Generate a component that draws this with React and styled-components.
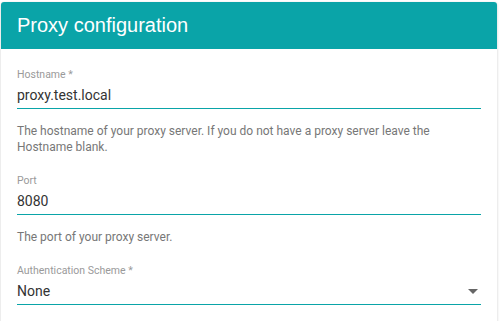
import styled, { createGlobalStyle } from 'styled-components'

const teal = '#0aa4a8'

const GlobalStyle = createGlobalStyle`
  body {
    margin: 0;
    background: #fff;
    font-family: Roboto, "Liberation Sans", sans-serif;
  }
`

const Page = styled.div`
  padding: 2px 4px 0 1px;
`

const Card = styled.div`
  background: #fff;
  border-radius: 3px 3px 0 0;
  box-shadow: 0 1px 3px hsla(0, 0%, 0%, .2);
  overflow: hidden;
`

const Header = styled.div`
  display: flex;
  align-items: center;
  height: 47px;
  padding: 0 16px;
  background: ${teal};

  h2 {
    margin: 0;
    font-family: "Liberation Sans", Arial, sans-serif;
    font-weight: 400;
    font-size: 20px;
    color: #fff;
  }
`

const Body = styled.div`
  padding: 19px 16px 18px 16px;
`

const Field = styled.div`
  & + & {
    margin-top: ${({ gap }) => gap || 18}px;
  }
`

const Label = styled.div`
  font-size: 10.5px;
  line-height: 14px;
  color: #9a9a9a;
`

const Input = styled.div`
  display: flex;
  align-items: center;
  justify-content: space-between;
  padding: 3px 0;
  font-size: 14px;
  line-height: 20px;
  color: #333;
  border-bottom: 1px solid ${teal};
`

const Helper = styled.p`
  margin: 14px 0 0;
  font-size: 12px;
  line-height: 16px;
  color: #777;
`

const Arrow = styled.span`
  width: 0;
  height: 0;
  margin-right: 3px;
  border-left: 5px solid transparent;
  border-right: 5px solid transparent;
  border-top: 5px solid #666;
`

const App = () => (
  <Page>
    <GlobalStyle />
    <Card>
      <Header>
        <h2>Proxy configuration</h2>
      </Header>
      <Body>
        <Field>
          <Label>Hostname *</Label>
          <Input>proxy.test.local</Input>
          <Helper>
            The hostname of your proxy server. If you do not have a proxy server leave the Hostname blank.
          </Helper>
        </Field>
        <Field>
          <Label>Port</Label>
          <Input>8080</Input>
          <Helper>The port of your proxy server.</Helper>
        </Field>
        <Field gap={19}>
          <Label>Authentication Scheme *</Label>
          <Input>
            None
            <Arrow />
          </Input>
        </Field>
      </Body>
    </Card>
  </Page>
)

export default App
